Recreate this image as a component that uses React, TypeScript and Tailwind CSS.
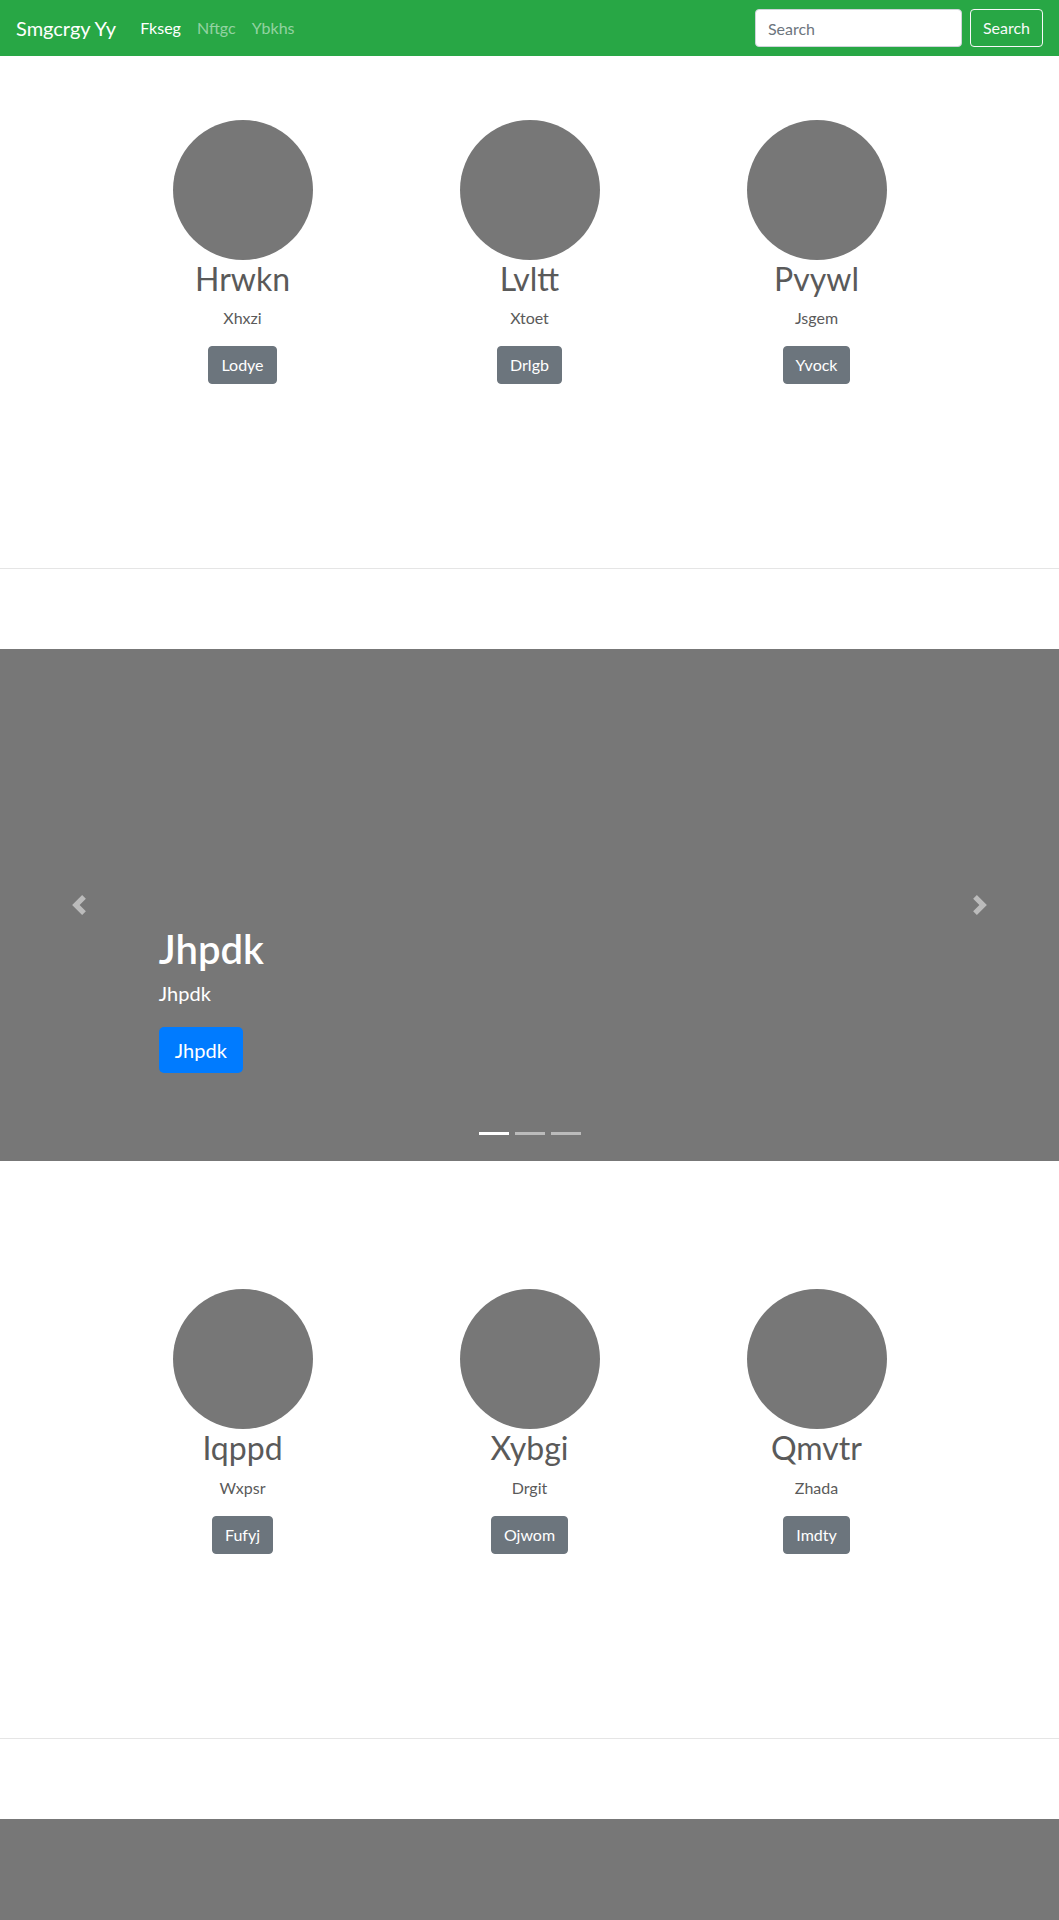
import React from 'react'

type Person = {
  name: string
  role: string
  action: string
}

const firstRow: Person[] = [
  { name: 'Hrwkn', role: 'Xhxzi', action: 'Lodye' },
  { name: 'Lvltt', role: 'Xtoet', action: 'Drlgb' },
  { name: 'Pvywl', role: 'Jsgem', action: 'Yvock' },
]

const secondRow: Person[] = [
  { name: 'Iqppd', role: 'Wxpsr', action: 'Fufyj' },
  { name: 'Xybgi', role: 'Drgit', action: 'Ojwom' },
  { name: 'Qmvtr', role: 'Zhada', action: 'Imdty' },
]

function Navbar() {
  return (
    <nav className="flex h-14 items-center justify-between bg-[#28a745] px-4">
      <div className="flex items-center">
        <a className="mr-4 text-xl leading-[30px] text-white">Smgcrgy Yy</a>
        <ul className="flex">
          <li><a className="block px-2 py-2 text-white">Fkseg</a></li>
          <li><a className="block px-2 py-2 text-white/50">Nftgc</a></li>
          <li><a className="block px-2 py-2 text-white/50">Ybkhs</a></li>
        </ul>
      </div>
      <form className="flex items-center">
        <input
          type="text"
          placeholder="Search"
          className="mr-2 h-[38px] w-[207px] rounded border border-[#ced4da] bg-white px-3 text-base text-[#495057] outline-none placeholder:text-[#6c757d]"
        />
        <button
          type="button"
          className="h-[38px] rounded border border-[#f8f9fa] px-3 text-base text-[#f8f9fa]"
        >
          Search
        </button>
      </form>
    </nav>
  )
}

function Marketing({ people }: { people: Person[] }) {
  return (
    <section className="mx-auto grid max-w-[861px] grid-cols-3 pt-16 pb-16">
      {people.map((p) => (
        <div key={p.name} className="mb-6 flex flex-col items-center px-[15px] text-center">
          <div className="h-[140px] w-[140px] rounded-full bg-[#777]" />
          <h2 className="mb-2 text-[32px] font-normal leading-[1.2]">{p.name}</h2>
          <p className="mb-4 leading-6">{p.role}</p>
          <p className="mb-4">
            <a className="inline-block rounded border border-[#6c757d] bg-[#6c757d] px-3 py-1.5 leading-6 text-white">
              {p.action}
            </a>
          </p>
        </div>
      ))}
    </section>
  )
}

function Chevron({ dir }: { dir: 'left' | 'right' }) {
  const d =
    dir === 'left'
      ? 'M5.25 0l-4 4 4 4 1.5-1.5L4.25 4l2.5-2.5L5.25 0z'
      : 'M2.75 0l-1.5 1.5L3.75 4l-2.5 2.5L2.75 8l4-4-4-4z'
  return (
    <svg width="20" height="20" viewBox="0 0 8 8" fill="#fff">
      <path d={d} />
    </svg>
  )
}

function Carousel({ title }: { title?: string }) {
  return (
    <div className="relative mb-16 h-[512px] overflow-hidden bg-[#777]">
      <div className="absolute inset-x-0 bottom-0 z-10 mb-4 flex justify-center">
        <span className="mx-[3px] py-[10px]"><span className="block h-[3px] w-[30px] bg-white" /></span>
        <span className="mx-[3px] py-[10px]"><span className="block h-[3px] w-[30px] bg-white/50" /></span>
        <span className="mx-[3px] py-[10px]"><span className="block h-[3px] w-[30px] bg-white/50" /></span>
      </div>

      {title && (
        <div className="absolute bottom-12 left-[15%] right-[15%] z-10 py-5 text-left text-white">
          <h1 className="mb-2 text-[40px] font-semibold leading-[1.2]">{title}</h1>
          <p className="mb-[22px] text-xl leading-6">{title}</p>
          <p className="mb-5">
            <a className="inline-block rounded-[5px] bg-[#007bff] px-4 py-2 text-xl leading-[30px] text-white">
              {title}
            </a>
          </p>
        </div>
      )}

      <a className="absolute inset-y-0 left-0 flex w-[15%] items-center justify-center opacity-50">
        <Chevron dir="left" />
      </a>
      <a className="absolute inset-y-0 right-0 flex w-[15%] items-center justify-center opacity-50">
        <Chevron dir="right" />
      </a>
    </div>
  )
}

export default function App() {
  return (
    <div className="h-[1920px] overflow-hidden bg-white text-base text-[#5a5a5a] [font-family:Lato,'Noto_Sans',sans-serif]">
      <Navbar />
      <Marketing people={firstRow} />
      <hr className="my-20 border-t border-black/10" />
      <Carousel title="Jhpdk" />
      <Marketing people={secondRow} />
      <hr className="my-20 border-t border-black/10" />
      <Carousel />
    </div>
  )
}
